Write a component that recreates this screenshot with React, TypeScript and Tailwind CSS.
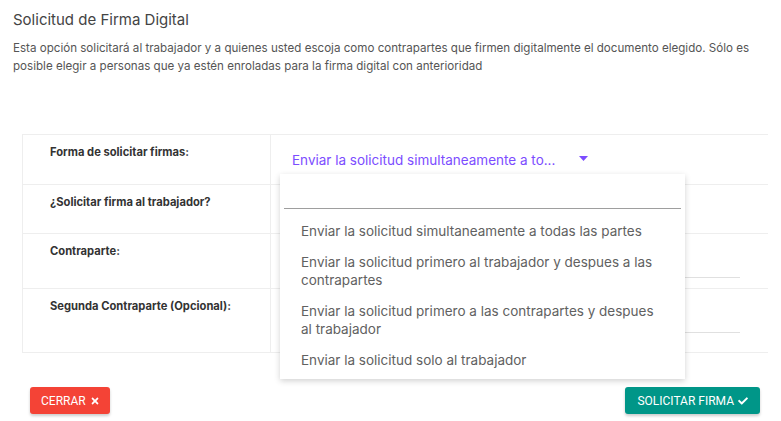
import { FaCheck, FaTimes } from "react-icons/fa"

const rows = [
  { label: "Forma de solicitar firmas:", h: "h-[50px]", kind: "select" },
  { label: "¿Solicitar firma al trabajador?", h: "h-[49px]", kind: "none" },
  { label: "Contraparte:", h: "h-[55px]", kind: "input" },
  { label: "Segunda Contraparte (Opcional):", h: "h-[64px]", kind: "input" },
]

const options = [
  "Enviar la solicitud simultaneamente a todas las partes",
  "Enviar la solicitud primero al trabajador y despues a las contrapartes",
  "Enviar la solicitud primero a las contrapartes y despues al trabajador",
  "Enviar la solicitud solo al trabajador",
]

function SelectDropdown() {
  return (
    <div className="relative">
      <div className="flex items-center pl-[21px] pt-[16px]">
        <span className="text-[13.5px] leading-[18px] text-[#7c4dff]">Enviar la solicitud simultaneamente a to...</span>
        <svg className="ml-[24px] -mt-[3px]" width="9" height="5" viewBox="0 0 9 5">
          <path d="M0 0 L9 0 L4.5 5 Z" fill="#7c4dff" />
        </svg>
      </div>

      {/* menu abierto */}
      <div className="absolute left-[9px] top-[39px] z-10 w-[405px] bg-white shadow-[0_2px_6px_rgba(0,0,0,0.18)] pb-[4px]">
        <div className="mx-[4px] h-[35px] border-b border-[#9e9e9e]" />
        <ul className="mt-[6px]">
          {options.map((opt) => (
            <li key={opt} className="px-[21px] py-[6.5px] text-[13.5px] leading-[18px] text-[#616161]">
              {opt}
            </li>
          ))}
        </ul>
      </div>
    </div>
  )
}

export default function App() {
  return (
    <div className="w-[781px] h-[421px] bg-white overflow-hidden font-['Inter',sans-serif]">
      <div className="px-[13px] pt-[10px]">
        <h1 className="text-[15px] leading-5 text-[#444]">Solicitud de Firma Digital</h1>
        <p className="mt-[9px] w-[760px] text-[11.6px] leading-[18px] text-[#555]">
          Esta opción solicitará al trabajador y a quienes usted escoja como contrapartes que firmen digitalmente el
          documento elegido. Sólo es posible elegir a personas que ya estén enroladas para la firma digital con
          anterioridad
        </p>
      </div>

      <div className="ml-[22px] mt-[59px] w-[746px] border-l border-t border-[#eee]">
        {rows.map((row) => (
          <div key={row.label} className={`grid grid-cols-[248px_1fr] border-b border-[#eee] ${row.h}`}>
            <div className="border-r border-[#eee] pl-[27px] pt-[11px] text-[11.2px] leading-[13px] font-bold text-[#333]">
              {row.label}
            </div>
            <div>
              {row.kind === "select" && <SelectDropdown />}
              {row.kind === "input" && <div className="ml-[21px] mr-[28px] h-[44px] border-b border-[#e0e0e0]" />}
            </div>
          </div>
        ))}
      </div>

      <div className="mt-[34px] flex justify-between pl-[30px] pr-[21px]">
        <button className="flex h-[27px] items-center gap-[4px] rounded-[3px] bg-[#f44336] pl-[11px] pr-[10px] font-['Roboto',sans-serif] text-[12px] text-white shadow-[0_2px_3px_rgba(0,0,0,0.2)]">
          CERRAR
          <FaTimes className="h-[10px] w-[10px]" />
        </button>
        <button className="flex h-[27px] items-center gap-[4px] rounded-[3px] bg-[#009688] px-[12px] font-['Roboto',sans-serif] text-[12px] text-white shadow-[0_2px_3px_rgba(0,0,0,0.2)]">
          SOLICITAR FIRMA
          <FaCheck className="h-[10px] w-[10px]" />
        </button>
      </div>
    </div>
  )
}
